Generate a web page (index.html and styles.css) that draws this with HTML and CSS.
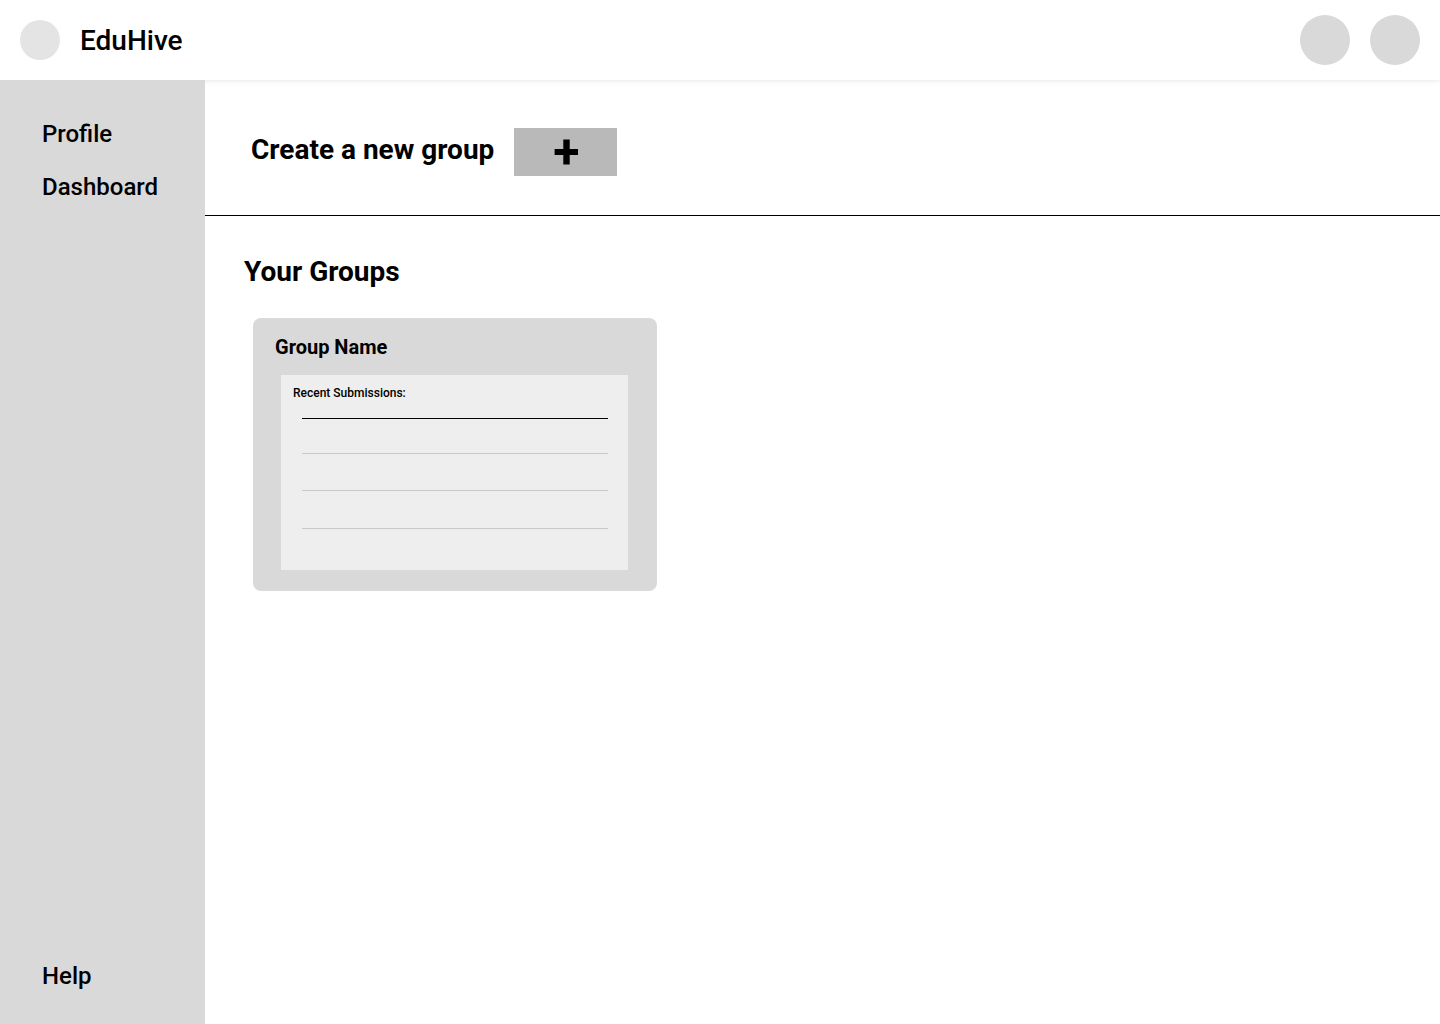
FILE: index.html
```html
<!DOCTYPE html>
<html lang="en">
<head>
<meta charset="utf-8">
<meta name="viewport" content="width=device-width, initial-scale=1">
<title>EduHive</title>
<link rel="stylesheet" href="styles.css">
</head>
<body>
<header class="topbar">
  <span class="logo"></span>
  <span class="brand">EduHive</span>
  <div class="actions">
    <button class="round" type="button" aria-label="Notifications"></button>
    <button class="round" type="button" aria-label="Account"></button>
  </div>
</header>
<div class="layout">
  <nav class="sidebar">
    <a href="#profile">Profile</a>
    <a href="#dashboard">Dashboard</a>
    <a class="help" href="#help">Help</a>
  </nav>
  <main class="content">
    <section class="create">
      <h2>Create a new group</h2>
      <button class="add" type="button" aria-label="Create group">
        <svg width="25" height="26" viewBox="0 0 25 26"><path d="M10.3.4h6.4V10H25v6h-8.3v9.6h-6.4V16H1.6v-6h8.7z"/></svg>
      </button>
    </section>
    <section class="groups">
      <h2>Your Groups</h2>
      <article class="card">
        <h3>Group Name</h3>
        <div class="recent">
          <h4>Recent Submissions:</h4>
          <ul class="lines">
            <li></li>
            <li></li>
            <li></li>
            <li></li>
          </ul>
        </div>
      </article>
    </section>
  </main>
</div>
</body>
</html>
```
FILE: styles.css
```css
* { box-sizing: border-box; }
body {
  display: flex;
  flex-direction: column;
  min-height: 100vh;
  margin: 0;
  background: #fff;
  color: #000;
  font-family: Roboto, "Liberation Sans", sans-serif;
}
h2, h3, h4, ul { margin: 0; padding: 0; }
button { border: 0; padding: 0; }
.topbar {
  display: flex;
  align-items: center;
  gap: 20px;
  height: 80px;
  padding: 0 20px;
  box-shadow: 0 0 6px rgba(0, 0, 0, 0.12);
}
.logo {
  width: 40px;
  height: 40px;
  border-radius: 50%;
  background: #e4e4e4;
}
.brand { padding-top: 2px; font-size: 28px; line-height: 36px; font-weight: 500; }
.actions { display: flex; gap: 20px; margin-left: auto; }
.round {
  width: 50px;
  height: 50px;
  border-radius: 50%;
  background: #d9d9d9;
}
.layout { display: flex; flex: 1; }
.sidebar {
  position: relative;
  display: flex;
  flex-direction: column;
  gap: 21px;
  width: 205px;
  padding: 38px 42px 32px;
  background: #d9d9d9;
}
.sidebar a {
  color: inherit;
  font-size: 24px;
  line-height: 32px;
  font-weight: 500;
  text-decoration: none;
}
.sidebar .help { margin-top: auto; }
.content { flex: 1; }
.create {
  display: flex;
  align-items: flex-start;
  gap: 20px;
  padding: 48px 46px 39px;
  border-bottom: 1px solid #000;
}
h2 { font-size: 28px; line-height: 44px; font-weight: 700; }
.add {
  display: flex;
  align-items: center;
  justify-content: center;
  width: 103px;
  height: 48px;
  background: #b9b9b9;
}
.groups { padding: 34px 39px; }
.card {
  max-width: 404px;
  margin: 24px 9px 0;
  padding: 17px 29px 21px 28px;
  border-radius: 8px;
  background: #d9d9d9;
}
h3 { margin-left: -6px; font-size: 20px; line-height: 24px; font-weight: 700; }
.recent {
  margin-top: 16px;
  padding: 10px 20px 41px 21px;
  background: #eee;
}
h4 { margin-left: -9px; font-size: 12px; line-height: 16px; font-weight: 500; }
.lines { margin-top: 17px; list-style: none; }
.lines li { height: 37px; border-top: 1px solid #c8c8c8; }
.lines li:first-child { height: 35px; border-color: #000; }
.lines li:nth-child(3) { height: 38px; }
.lines li:last-child { height: 1px; }
```
